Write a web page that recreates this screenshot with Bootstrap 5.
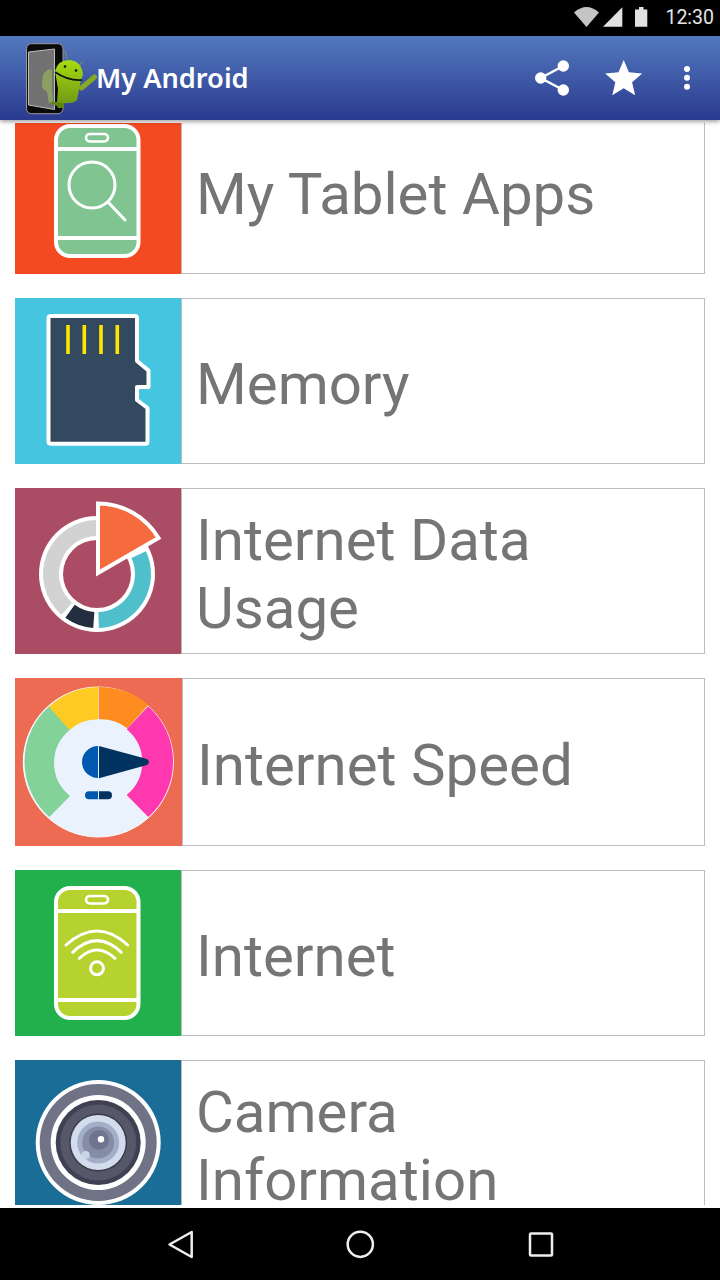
<!DOCTYPE html>
<html lang="en">
<head>
  <meta charset="UTF-8">
  <meta name="viewport" content="width=device-width, initial-scale=1">
  <title>My Android</title>
  <link href="https://cdn.jsdelivr.net/npm/bootstrap@5.3.0/dist/css/bootstrap.min.css" rel="stylesheet">
  <style>
    body {
      width: 720px;
      height: 1280px;
      overflow: hidden;
      background-color: #fff;
      font-family: Roboto, sans-serif;
    }
    .status-strip {
      height: 36px;
      background-color: #000;
      padding-right: 6px;
    }
    .status-time {
      color: #e4e4e4;
      font-size: 19.5px;
      line-height: 36px;
      margin-left: 17px;
    }
    .app-bar {
      height: 84px;
      background: linear-gradient(to bottom, #5379bf, #2a3a8e);
      box-shadow: 0 2px 4px rgba(0, 0, 0, .35);
      position: relative;
      z-index: 2;
    }
    .app-logo {
      margin-left: 25px;
    }
    .app-title {
      color: #fff;
      font-family: "Noto Sans", sans-serif;
      font-size: 27.2px;
      font-weight: 600;
      line-height: 84px;
      margin-left: -1px;
    }
    .bar-icon {
      display: block;
    }
    .tile-area {
      height: 1088px;
      overflow: hidden;
      border-top: 3px solid #fff;
      border-bottom: 3px solid #fff;
    }
    .tile-list {
      margin: -15px 15px 0;
      gap: 24px;
    }
    .tile-row {
      height: 166px;
    }
    .tile-row-tall {
      height: 168px;
    }
    .tile-pic {
      width: 166px;
      height: 100%;
      flex: none;
      display: block;
    }
    .tile-row-tall .tile-pic {
      width: 167px;
    }
    .tile-text {
      border: 1px solid #bdbdbd;
      color: #757575;
      font-size: 58.2px;
      line-height: 68px;
      padding-top: 6px;
      padding-left: 14px;
    }
    .nav-strip {
      height: 72px;
      background-color: #000;
      display: block;
    }
  </style>
</head>
<body class="d-flex flex-column">

<div class="status-strip d-flex align-items-center justify-content-end flex-none">
  <svg width="74" height="36" viewBox="575 0 74 36">
    <path d="M575 12.5 Q587.5 1.5 600 12.5 L587.5 27z" fill="#c4c4c4"/>
    <path d="M604 26.7 L623.3 7.3 V26.7z" fill="#e2e2e2"/>
    <path d="M636 9.5 H640 V7 H644.5 V9.5 H648.3 V26.7 H636z" fill="#e2e2e2"/>
  </svg>
  <span class="status-time">12:30</span>
</div>

<header class="app-bar d-flex align-items-center">
  <svg class="app-logo" width="72" height="74" viewBox="25 40 72 74">
    <defs>
      <linearGradient id="droidGreen" x1="0" y1="0" x2="0" y2="1">
        <stop offset="0" stop-color="#a8dc10"/>
        <stop offset="1" stop-color="#6f9a14"/>
      </linearGradient>
    </defs>
    <rect x="26.5" y="42.7" width="36.5" height="70" rx="5" fill="#0a0a0a" stroke="#9a9a9a" stroke-width="1"/>
    <path d="M28.5 51 L54.5 48 V108.5 L28.5 104z" fill="#727272" stroke="#bdbdbd" stroke-width="1"/>
    <path d="M43 74 Q48 66 52 69 V88 L53 100 L49 103 L47 91 Q41 88 42 82z" fill="#8b9f62"/>
    <path d="M49 101 H64 V107 H60 Q58 108 57 105z" fill="#5d8410"/>
    <path d="M65 50 L67 58 M83 60 L79 65" stroke="#7d8d5a" stroke-width="1.2"/>
    <path d="M55 70 Q58 59 69 59 Q82 60 83 74 L81 79 L77 99 Q73 103 62 102 L57 101 L58 88z" fill="url(#droidGreen)"/>
    <path d="M55 71 Q68 80 82 79" stroke="#111" stroke-width="1.6" fill="none"/>
    <circle cx="65" cy="65.5" r="1.3" fill="#111"/>
    <circle cx="76" cy="69.5" r="1.3" fill="#111"/>
    <path d="M81.5 87 L94.5 76" stroke="#86aa24" stroke-width="5" stroke-linecap="round"/>
  </svg>
  <span class="app-title">My Android</span>
  <div class="ms-auto">
    <svg class="bar-icon" width="195" height="84" viewBox="525 36 195 84">
      <path d="M563.3 66 L540.7 78 L563.3 90" fill="none" stroke="#fff" stroke-width="2.4"/>
      <circle cx="563.3" cy="66" r="5.7" fill="#fff"/>
      <circle cx="540.7" cy="78" r="5.7" fill="#fff"/>
      <circle cx="563.3" cy="90" r="5.7" fill="#fff"/>
      <path transform="translate(601.5 56.3) scale(1.85)" d="M12 17.27L18.18 21l-1.64-7.03L22 9.24l-7.19-.61L12 2 9.19 8.63 2 9.24l5.46 4.73L5.82 21z" fill="#fff"/>
      <circle cx="687" cy="69" r="3" fill="#fff"/>
      <circle cx="687" cy="77.7" r="3" fill="#fff"/>
      <circle cx="687" cy="86.7" r="3" fill="#fff"/>
    </svg>
  </div>
</header>

<main class="tile-area">
  <div class="tile-list d-flex flex-column">

    <div class="tile-row d-flex">
      <svg class="tile-pic" viewBox="0 0 166 166">
        <rect width="166" height="166" fill="#f44a22"/>
        <rect x="41" y="18" width="82.5" height="130" rx="14" fill="#80c591" stroke="#fff" stroke-width="4"/>
        <path d="M41 41 H123.5 M41 130 H123.5" stroke="#fff" stroke-width="4"/>
        <rect x="71" y="26" width="22" height="7.5" rx="3.7" fill="none" stroke="#fff" stroke-width="2.5"/>
        <circle cx="77" cy="77" r="23" fill="none" stroke="#fff" stroke-width="3"/>
        <path d="M93 94 L110 112" stroke="#fff" stroke-width="3" stroke-linecap="round"/>
      </svg>
      <div class="tile-text flex-grow-1 d-flex align-items-center">My Tablet Apps</div>
    </div>

    <div class="tile-row d-flex">
      <svg class="tile-pic" viewBox="0 0 166 166">
        <rect width="166" height="166" fill="#45c5e0"/>
        <path d="M36 18 H120 Q122 18 122 20 V63 L133.5 72.5 V89 H122 V102 L132.5 110 V143.7 Q132.5 145.7 130.5 145.7 H36 Q33.5 145.7 33.5 143.7 V20 Q33.5 18 36 18z" fill="#33495f" stroke="#fff" stroke-width="4" stroke-linejoin="round"/>
        <path d="M53 27 V56 M69.3 27 V56 M86 27 V56 M102.3 27 V56" stroke="#ffe600" stroke-width="3.6"/>
      </svg>
      <div class="tile-text flex-grow-1 d-flex align-items-center">Memory</div>
    </div>

    <div class="tile-row d-flex">
      <svg class="tile-pic" viewBox="0 0 166 166">
        <rect width="166" height="166" fill="#aa4c63"/>
        <circle cx="82" cy="86" r="58" fill="#fff"/>
        <g fill="none" stroke-width="16">
          <path d="M123.7 66.6 A46 46 0 0 1 83.6 132" stroke="#4fbfcc"/>
          <path d="M78.8 131.9 A46 46 0 0 1 55 123.2" stroke="#232f3f"/>
          <path d="M51.8 120.7 A46 46 0 0 1 82 40" stroke="#d2d2d2"/>
        </g>
        <circle cx="82" cy="86" r="34" fill="#aa4c63"/>
        <path d="M83 85 V15.5 A70 70 0 0 1 143.5 50z" fill="#f56b3e" stroke="#fff" stroke-width="4"/>
      </svg>
      <div class="tile-text flex-grow-1 d-flex align-items-center">Internet Data<br>Usage</div>
    </div>

    <div class="tile-row tile-row-tall d-flex">
      <svg class="tile-pic" viewBox="0 0 167 168">
        <rect width="167" height="168" fill="#ec6b52"/>
        <circle cx="83.3" cy="84" r="75" fill="#eaf3fd" stroke="#fff" stroke-width="1"/>
        <path d="M34.3 29.3 A73.5 73.5 0 0 0 34.3 138 L54 118 A43 43 0 0 1 54.3 51.3z" fill="#82d29a" stroke="#82d29a" stroke-width="1.5" stroke-linejoin="round"/>
        <path d="M34 28.7 A75 75 0 0 1 83 9 V41.3 A43 43 0 0 0 54.5 52z" fill="#ffca22"/>
        <path d="M83.7 9 A75 75 0 0 1 133.3 27 L112.3 50.3 A43 43 0 0 0 83.7 41.3z" fill="#ff8c1e"/>
        <path d="M133.3 29.3 A73.5 73.5 0 0 1 133.3 138 L112.7 117 A43 43 0 0 0 112.7 51.3z" fill="#ff38b0" stroke="#ff38b0" stroke-width="1.5" stroke-linejoin="round"/>
        <path d="M83 68 A16 16 0 0 0 83 100z" fill="#0058b0"/>
        <path d="M84 68 L132 81 Q136 84 132 87 L84 100.3z" fill="#00335f"/>
        <path d="M83 113.3 H74 A4 4 0 0 0 74 121.3 H83z" fill="#0058b0"/>
        <path d="M84 113.3 H93 A4 4 0 0 1 93 121.3 H84z" fill="#00335f"/>
      </svg>
      <div class="tile-text flex-grow-1 d-flex align-items-center">Internet Speed</div>
    </div>

    <div class="tile-row d-flex">
      <svg class="tile-pic" viewBox="0 0 166 166">
        <rect width="166" height="166" fill="#22b04c"/>
        <rect x="41" y="18" width="82.5" height="130" rx="14" fill="#b5d22e" stroke="#fff" stroke-width="4"/>
        <path d="M41 41 H123.5 M41 130 H123.5" stroke="#fff" stroke-width="4"/>
        <rect x="71" y="26" width="22" height="7.5" rx="3.7" fill="none" stroke="#fff" stroke-width="2.5"/>
        <g fill="none" stroke="#fff" stroke-width="3" stroke-linecap="round">
          <path d="M51 75 Q82 47 112.7 75"/>
          <path d="M57.7 82.3 Q82 59 106.3 82.3"/>
          <path d="M64.3 88.3 Q82 71.7 100 88.3"/>
          <circle cx="82" cy="98.3" r="6.5"/>
        </g>
      </svg>
      <div class="tile-text flex-grow-1 d-flex align-items-center">Internet</div>
    </div>

    <div class="tile-row d-flex">
      <svg class="tile-pic" viewBox="0 0 166 166">
        <rect width="166" height="166" fill="#196d96"/>
        <circle cx="83.2" cy="82.5" r="62.5" fill="#fff"/>
        <circle cx="83.2" cy="82.5" r="58.5" fill="#707285"/>
        <circle cx="83.2" cy="82.5" r="47.5" fill="#fff"/>
        <circle cx="83.2" cy="82.5" r="42.5" fill="#3f4052"/>
        <circle cx="83.2" cy="82.5" r="38" fill="#565869"/>
        <circle cx="83.2" cy="82.5" r="29" fill="#393a4c"/>
        <circle cx="83.2" cy="82.5" r="27.5" fill="#d3dcec"/>
        <circle cx="83.2" cy="82.5" r="21" fill="#a3aec8"/>
        <circle cx="83.2" cy="82.5" r="16" fill="#868ca6"/>
        <circle cx="84" cy="80" r="10" fill="#6f7590"/>
        <circle cx="86" cy="79.3" r="3.2" fill="#fff"/>
        <circle cx="70.7" cy="95" r="4" fill="#c9d6e6"/>
      </svg>
      <div class="tile-text flex-grow-1 d-flex align-items-center">Camera<br>Information</div>
    </div>

  </div>
</main>

<svg class="nav-strip" width="720" height="72" viewBox="0 1208 720 72">
  <g fill="none" stroke="#eee" stroke-width="2.5" stroke-linejoin="round">
    <path d="M191.7 1232 L169.5 1244.5 L191.7 1257z"/>
    <circle cx="360.3" cy="1244.3" r="12.6"/>
    <rect x="530" y="1233.5" width="22" height="22" rx="1"/>
  </g>
</svg>

<script src="https://cdn.jsdelivr.net/npm/bootstrap@5.3.0/dist/js/bootstrap.bundle.min.js"></script>
</body>
</html>
